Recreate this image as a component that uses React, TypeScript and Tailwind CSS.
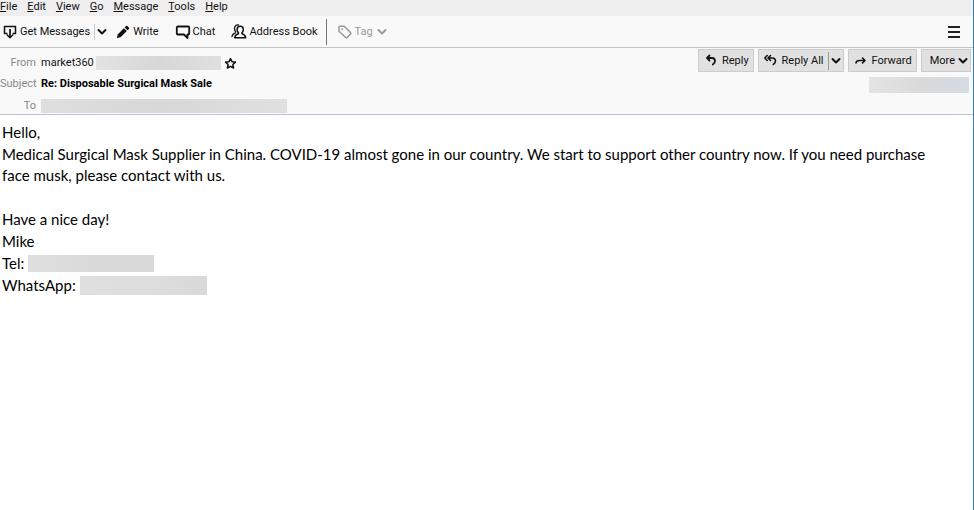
import type { ReactNode } from 'react';

const menus = ['File', 'Edit', 'View', 'Go', 'Message', 'Tools', 'Help'];

function Chevron({ className = '' }: { className?: string }) {
  return (
    <svg aria-hidden="true" width="10" height="10" viewBox="0 0 10 10" fill="none" stroke="currentColor" strokeWidth="2" strokeLinecap="round" strokeLinejoin="round" className={`shrink-0 ${className}`}>
      <path d="M1.5 3 5 6.500 8.500 3" />
    </svg>
  );
}

function Icon({ children }: { children: ReactNode }) {
  return (
    <svg aria-hidden="true" width="16" height="16" viewBox="0 0 16 16" fill="none" stroke="currentColor" strokeWidth="1.8" strokeLinecap="round" strokeLinejoin="round" className="shrink-0">
      {children}
    </svg>
  );
}

function Redacted({ className }: { className: string }) {
  return <span aria-label="Redacted" role="img" className={`block shrink-0 bg-linear-to-r ${className}`} />;
}

const action = 'flex h-[23px] items-center border border-[#cccccc] bg-[#e1e1e1]';

export default function App() {
  return (
    <div className="flex min-h-screen flex-col border-r border-[#2f7fb8] bg-white font-['Roboto','Open_Sans',sans-serif] text-[11px] leading-4 text-[#111111]">
      <nav className="flex h-4 items-start gap-2.5 bg-[#efefef] leading-[13px]">
        {menus.map((m) => (
          <button key={m} type="button">
            <span className="underline underline-offset-1">{m[0]}</span>
            {m.slice(1)}
          </button>
        ))}
      </nav>

      <div className="flex h-8 items-center border-b border-[#c4c4c4] bg-[#f9f9f9] pl-0.5">
        <button type="button" className="flex items-center gap-0.5">
          <Icon>
            <path strokeWidth="1.500" strokeLinecap="butt" d="M5.500 9.500H2.500V2.500h11v7h-3" />
            <path strokeWidth="1.700" strokeLinecap="butt" d="M8 5v8" />
            <path strokeWidth="1.500" d="M5.200 11 8 13.800 10.800 11" />
          </Icon>
          Get Messages
        </button>
        <span className="ml-1 h-4 w-px bg-[#c8c8c8]" />
        <button type="button" aria-label="Get messages options" className="ml-0.5">
          <Chevron />
        </button>
        <button type="button" className="ml-2 flex items-center gap-0.5">
          <Icon>
            <path d="m1.800 14.200 1.100-4 6-6 2.900 2.900-6 6z" fill="currentColor" stroke="none" />
            <path d="m9.700 3.400 1.300-1.300a1 1 0 0 1 1.400 0l1.500 1.500a1 1 0 0 1 0 1.400l-1.300 1.300z" fill="currentColor" stroke="none" />
          </Icon>
          Write
        </button>
        <button type="button" className="ml-4 flex items-center gap-0.5">
          <Icon>
            <path d="M2.800 2.500h10.400a1 1 0 0 1 1 1v6a1 1 0 0 1-1 1h-.7V14L9 10.500H2.800a1 1 0 0 1-1-1v-6a1 1 0 0 1 1-1z" />
          </Icon>
          Chat
        </button>
        <button type="button" className="ml-4 flex items-center gap-0.5">
          <Icon>
            <path strokeWidth="1.500" d="M9.200 2.300c2 0 3.100 1.400 3.100 3.200 0 1.500-.6 2.500-1.300 3.100v1.100c1.800.5 3.400 1.400 3.700 4.100H3.700c.3-2.700 1.900-3.600 3.700-4.100V8.600C6.700 8 6.100 7 6.100 5.500c0-1.800 1.100-3.200 3.100-3.200z" />
            <path strokeWidth="1.300" d="M7.500 1C5 .7 3.500 2.300 3.500 4.500c0 1.500.4 2.400 1.100 3.200M4.500 8.800C2.500 9.400 1.300 10.500 1 12.500" />
          </Icon>
          Address Book
        </button>
        <span className="ml-2 h-[26px] w-px bg-[#777777]" />
        <button type="button" disabled className="ml-2.5 flex items-center gap-0.5 text-[#999999]">
          <Icon>
            <path strokeWidth="1.500" d="M2 3v4.300l6.700 6.200a1 1 0 0 0 1.400 0l3.400-3.600a1 1 0 0 0 0-1.400L7.200 2.200H2.800A.8.800 0 0 0 2 3z" />
            <circle cx="5" cy="5.200" r=".5" fill="currentColor" strokeWidth="1" />
          </Icon>
          Tag
          <Chevron className="ml-0.5" />
        </button>
        <button type="button" aria-label="Application menu" className="mr-[13px] ml-auto flex w-3 flex-col gap-[3px]">
          <span className="h-0.5 w-full bg-[#222222]" />
          <span className="h-0.5 w-full bg-[#222222]" />
          <span className="h-0.5 w-full bg-[#222222]" />
        </button>
      </div>

      <header className="flex h-[67px] justify-between border-b border-[#b9c5d1] bg-[#f9f9f9]">
        <dl className="grid grid-cols-[36px_auto] grid-rows-[30px_12px_24px] items-center gap-x-[5px]">
          <dt className="text-right text-[#888888]">From</dt>
          <dd className="flex items-center">
            market360
            <Redacted className="ml-0.5 h-[14px] w-[125px] from-[#e3e3e3] via-[#d7d7d7] to-[#dfdfdf]" />
            <button type="button" aria-label="Star contact" className="ml-[3px]">
              <svg aria-hidden="true" width="13" height="13" viewBox="0 0 13 13" fill="none" stroke="currentColor" strokeWidth="1.500" strokeLinejoin="round">
                <path d="m6.500 1.600 1.500 3.100 3.400.4-2.500 2.400.7 3.500-3.100-1.700L3.400 11l.7-3.500-2.500-2.400 3.400-.4z" />
              </svg>
            </button>
          </dd>
          <dt className="text-right text-[#888888]">Subject</dt>
          <dd className="font-bold text-black">Re: Disposable Surgical Mask Sale</dd>
          <dt className="pt-2 text-right text-[#888888]">To</dt>
          <dd className="pt-2">
            <Redacted className="h-[14px] w-[246px] from-[#dedede] via-[#d8d8d8] to-[#e0e0e0]" />
          </dd>
        </dl>

        <div className="flex flex-col items-end pt-px pr-0.5">
          <div className="flex gap-1">
            <button type="button" className={`${action} gap-[3px] px-1`}>
              <Icon>
                <path d="M6.500 2.500 4 5l2.500 2.500M4.500 5H9a3 3 0 0 1 3 3c0 1.600-.8 2.600-2.200 3.500" />
              </Icon>
              Reply
            </button>
            <div className={action}>
              <button type="button" className="flex items-center gap-[3px] px-1">
                <Icon>
                  <path strokeWidth="1.600" d="M4.200 2.500 1.800 5l2.400 2.500M7.500 2.500 5 5l2.500 2.500M5.500 5H9.500a3 3 0 0 1 3 3c0 1.600-.8 2.600-2.200 3.500" />
                </Icon>
                Reply All
              </button>
              <span className="h-[18px] w-px bg-[#999999]" />
              <button type="button" aria-label="More reply options" className="px-0.5">
                <Chevron />
              </button>
            </div>
            <button type="button" className={`${action} gap-[3px] px-1`}>
              <Icon>
                <path strokeWidth="1.600" d="M9.500 5 12 7.500 9.500 10M11.500 7.500H6.500C4.500 7.500 3.200 8.300 3 10" />
              </Icon>
              Forward
            </button>
            <button type="button" className={`${action} gap-[3px] pr-0.5 pl-2`}>
              More
              <Chevron />
            </button>
          </div>
          <Redacted className="mt-[5px] mr-0.5 h-4 w-[100px] from-[#e4e4e4] via-[#dadada] to-[#d5dce4]" />
        </div>
      </header>

      <main className="pt-1.5 pr-8 pl-0.5 font-['Lato','Liberation_Sans',sans-serif] text-[15px] leading-[22px] text-black">
        <p>Hello,</p>
        <p className="pt-px leading-[21px]">
          Medical Surgical Mask Supplier in China. COVID-19 almost gone in our country. We start to support other country now. If you need purchase face musk, please contact with us.
        </p>
        <p className="pt-[22px]">Have a nice day!</p>
        <p>Mike</p>
        <p className="flex items-center gap-1">
          Tel:
          <Redacted className="h-[17px] w-[126px] from-[#dfdfdf] via-[#dadada] to-[#d9d9d9]" />
        </p>
        <p className="flex items-center gap-1">
          WhatsApp:
          <Redacted className="h-[19px] w-[127px] from-[#dfdfdf] via-[#dedede] to-[#d9d9d9]" />
        </p>
      </main>
    </div>
  );
}
